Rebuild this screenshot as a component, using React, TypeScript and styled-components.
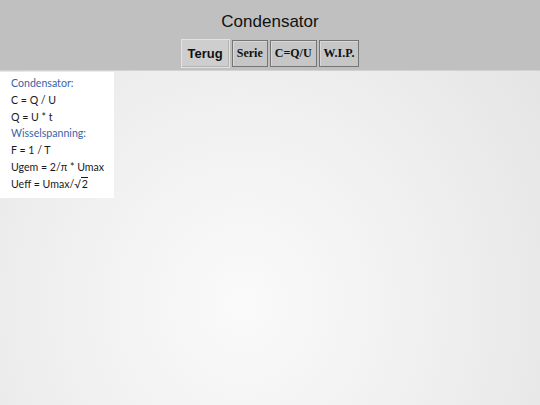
import React from 'react';
import styled, { createGlobalStyle } from 'styled-components';

const GlobalStyle = createGlobalStyle`
    html, body {
        margin: 0;
        padding: 0;
        height: 100%;
    }
    #root {
        min-height: 100%;
    }
`;

const Page = styled.div`
    width: 540px;
    height: 405px;
    display: flex;
    flex-direction: column;
    overflow: hidden;
    background: radial-gradient(ellipse 75% 110% at 45% 75%, #fafafa 0%, #f0f0f0 45%, #e2e2e2 100%);
`;

const Header = styled.header`
    height: 71px;
    box-sizing: border-box;
    padding-top: 11px;
    background: #c0c0c0;
    border-bottom: 1px solid #d2d2d2;
    display: flex;
    flex-direction: column;
    align-items: center;
`;

const Title = styled.h1`
    margin: 0;
    font-family: "Liberation Sans", Arial, sans-serif;
    font-weight: normal;
    font-size: 17px;
    line-height: 21px;
    color: #111;
`;

const ButtonRow = styled.nav`
    display: flex;
    align-items: center;
    gap: 2px;
    margin-top: 7px;
`;

const NavButton = styled.button<{ $active?: boolean }>`
    box-sizing: border-box;
    height: ${p => (p.$active ? '29px' : '27px')};
    padding: 0 ${p => (p.$active ? '6px' : '4px')};
    font-family: ${p => (p.$active ? '"Liberation Sans", Arial, sans-serif' : '"Liberation Serif", "Times New Roman", serif')};
    font-weight: bold;
    font-size: ${p => (p.$active ? '13px' : '12px')};
    color: #111;
    background: ${p => (p.$active ? '#cecece' : '#c6c6c6')};
    border: 1px solid ${p => (p.$active ? '#e2e2e2' : '#757575')};
    box-shadow: ${p => (p.$active ? 'inset -1px -1px 0 #b4b4b4' : 'inset 1px 1px 0 #d8d8d8')};
    border-radius: 0;
    cursor: pointer;
`;

const Body = styled.main`
    flex: 1;
    display: flex;
    align-items: flex-start;
    padding-top: 1px;
`;

const Sidebar = styled.aside`
    width: 114px;
    box-sizing: border-box;
    background: #ffffff;
    padding: 3px 0 5px 11px;
    font-family: Lato, "Open Sans", sans-serif;
    font-size: 10.6px;
`;

const Line = styled.div<{ $heading?: boolean }>`
    line-height: 16.8px;
    color: ${p => (p.$heading ? '#3a62a6' : '#1a1a1a')};
    white-space: nowrap;
`;

const Root = styled.span`
    border-top: 1px solid #1a1a1a;
    padding-left: 1px;
`;

const formulas: { text: React.ReactNode; heading?: boolean }[] = [
    { text: 'Condensator:', heading: true },
    { text: 'C = Q / U' },
    { text: 'Q = U * t' },
    { text: 'Wisselspanning:', heading: true },
    { text: 'F = 1 / T' },
    { text: 'Ugem = 2/π * Umax' },
    { text: <>Ueff = Umax/√<Root>2</Root></> },
];

export default function App() {
    return (
        <Page>
            <GlobalStyle />
            <Header>
                <Title>Condensator</Title>
                <ButtonRow>
                    <NavButton $active>Terug</NavButton>
                    <NavButton>Serie</NavButton>
                    <NavButton>C=Q/U</NavButton>
                    <NavButton>W.I.P.</NavButton>
                </ButtonRow>
            </Header>
            <Body>
                <Sidebar>
                    {formulas.map((f, i) => (
                        <Line key={i} $heading={f.heading}>{f.text}</Line>
                    ))}
                </Sidebar>
            </Body>
        </Page>
    );
}
